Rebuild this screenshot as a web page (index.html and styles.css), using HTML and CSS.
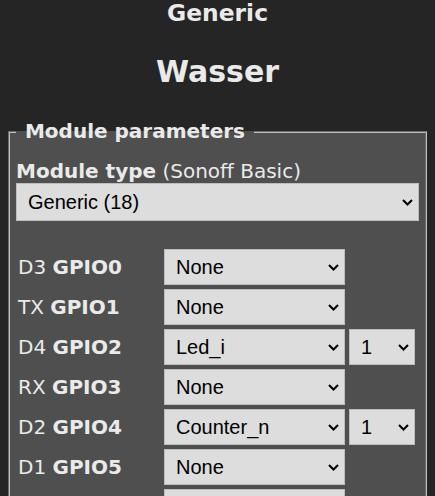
FILE: index.html
```html
<!DOCTYPE html>
<html lang="de">
<head>
<meta charset="utf-8">
<title>Wasser - Configure Module</title>
<link rel="stylesheet" href="styles.css">
</head>
<body>
<div class="wrap">
  <header class="head">
    <h3 class="dev">Generic</h3>
    <h2 class="name">Wasser</h2>
  </header>
  <fieldset class="box">
    <legend class="box-title">&nbsp;Module parameters&nbsp;</legend>
    <div class="mtype"><b>Module type</b> (Sonoff Basic)</div>
    <span class="sel sel-main">
      <select class="dd"><option selected>Generic (18)</option><option>Sonoff Basic (1)</option></select>
      <svg class="chev" viewBox="0 0 11 7"><polyline points="1,1 5.5,5.5 10,1"/></svg>
    </span>
    <div class="gpios">
      <div class="lbl">D3 <b>GPIO0</b></div>
      <span class="sel"><select class="dd"><option selected>None</option></select><svg class="chev" viewBox="0 0 11 7"><polyline points="1,1 5.5,5.5 10,1"/></svg></span>
      <span class="empty"></span>

      <div class="lbl">TX <b>GPIO1</b></div>
      <span class="sel"><select class="dd"><option selected>None</option></select><svg class="chev" viewBox="0 0 11 7"><polyline points="1,1 5.5,5.5 10,1"/></svg></span>
      <span class="empty"></span>

      <div class="lbl">D4 <b>GPIO2</b></div>
      <span class="sel"><select class="dd"><option selected>Led_i</option></select><svg class="chev" viewBox="0 0 11 7"><polyline points="1,1 5.5,5.5 10,1"/></svg></span>
      <span class="sel"><select class="dd"><option selected>1</option><option>2</option></select><svg class="chev" viewBox="0 0 11 7"><polyline points="1,1 5.5,5.5 10,1"/></svg></span>

      <div class="lbl">RX <b>GPIO3</b></div>
      <span class="sel"><select class="dd"><option selected>None</option></select><svg class="chev" viewBox="0 0 11 7"><polyline points="1,1 5.5,5.5 10,1"/></svg></span>
      <span class="empty"></span>

      <div class="lbl">D2 <b>GPIO4</b></div>
      <span class="sel"><select class="dd"><option selected>Counter_n</option></select><svg class="chev" viewBox="0 0 11 7"><polyline points="1,1 5.5,5.5 10,1"/></svg></span>
      <span class="sel"><select class="dd"><option selected>1</option><option>2</option></select><svg class="chev" viewBox="0 0 11 7"><polyline points="1,1 5.5,5.5 10,1"/></svg></span>

      <div class="lbl">D1 <b>GPIO5</b></div>
      <span class="sel"><select class="dd"><option selected>None</option></select><svg class="chev" viewBox="0 0 11 7"><polyline points="1,1 5.5,5.5 10,1"/></svg></span>
      <span class="empty"></span>

      <div class="lbl">D6 <b>GPIO12</b></div>
      <span class="sel"><select class="dd"><option selected>None</option></select><svg class="chev" viewBox="0 0 11 7"><polyline points="1,1 5.5,5.5 10,1"/></svg></span>
      <span class="empty"></span>
    </div>
  </fieldset>
</div>
</body>
</html>
```
FILE: styles.css
```css
html, body {
  margin: 0;
  overflow: hidden;
}
body {
  background: #252525;
  color: #eaeaea;
  font-family: "DejaVu Sans", Verdana, sans-serif;
  font-size: 20px;
}
.wrap {
  padding: 0 8px;
}
.head {
  text-align: center;
}
.dev {
  margin: 0;
  font-size: 23.4px;
  line-height: 27px;
  font-weight: bold;
}
.name {
  margin: 27px 0 0;
  font-size: 30px;
  line-height: 35px;
  font-weight: bold;
}
.box {
  margin: 31px 0 0;
  padding: 6px;
  border: 2px groove #c0c0c0;
  background: #4f4f4f;
  min-width: 0;
}
.box-title {
  padding: 0 2px;
  font-weight: bold;
  line-height: 23px;
}
.mtype {
  margin-top: 11px;
  line-height: 23px;
}
.sel {
  position: relative;
  display: block;
}
.dd {
  display: block;
  width: 100%;
  height: 36px;
  box-sizing: border-box;
  margin: 0;
  padding: 0 24px 0 11px;
  -webkit-appearance: none;
  appearance: none;
  background: #dddddd;
  color: #000000;
  border: 1px solid #bdbdbd;
  border-radius: 0;
  font-family: "Liberation Sans", Arial, sans-serif;
  font-size: 20px;
  line-height: 34px;
}
.sel-main .dd {
  height: 38px;
  line-height: 36px;
}
.chev {
  position: absolute;
  right: 6px;
  top: 50%;
  width: 11px;
  height: 7px;
  margin-top: -3px;
  pointer-events: none;
  fill: none;
  stroke: #000;
  stroke-width: 2;
}
.gpios {
  display: grid;
  grid-template-columns: 142px 181px 66px;
  column-gap: 4px;
  row-gap: 4px;
  align-items: center;
  margin: 28px 0 0 2px;
}
.lbl {
  white-space: nowrap;
}
```
